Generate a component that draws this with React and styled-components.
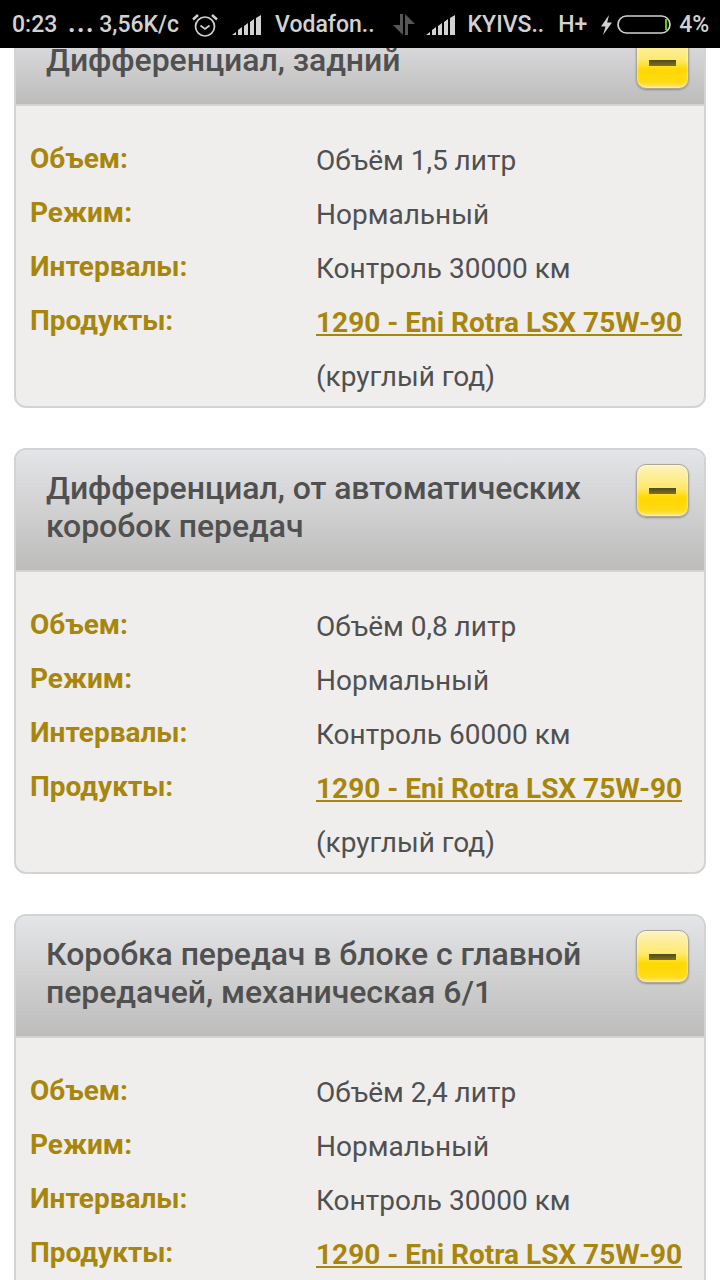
import React from 'react';
import styled, { createGlobalStyle } from 'styled-components';

const GlobalStyle = createGlobalStyle`
  html, body {
    margin: 0;
    padding: 0;
    background: #fff;
    font-family: Roboto, "Noto Sans", sans-serif;
  }
`;

const Screen = styled.div`
  position: relative;
  width: 720px;
  height: 1280px;
  overflow: hidden;
  background: #fff;
`;

const StatusBar = styled.div`
  position: absolute;
  top: 0;
  left: 0;
  right: 0;
  height: 48px;
  background: #000;
  color: #d2d2d2;
  display: flex;
  align-items: center;
  padding: 1px 0 0 12px;
  box-sizing: border-box;
  font-size: 23px;
  font-weight: 500;
  white-space: nowrap;
`;

const StatusText = styled.span`
  margin-left: ${props => props.$gap || 0}px;
`;

const StatusDots = styled.span`
  margin-left: 11px;
  font-weight: 900;
  letter-spacing: 2px;
`;

const StatusIcon = styled.svg`
  display: block;
  flex: none;
  margin-left: ${props => props.$gap || 0}px;
`;

const Page = styled.div`
  display: flex;
  flex-direction: column;
  gap: 40px;
  padding: 20px 14px 0;
`;

const Card = styled.section`
  border: 2px solid #d3d3d3;
  border-radius: 12px;
  background: #efeeed;
  overflow: hidden;
`;

const CardHeader = styled.header`
  display: flex;
  justify-content: space-between;
  align-items: flex-start;
  padding: 14px 15px 0 30px;
  background: linear-gradient(#e4e5e8, #bdbcbb);
  border-bottom: 2px solid #d3d3d3;
`;

const CardTitle = styled.h2`
  margin: 5px 0 25px;
  font-size: 32px;
  line-height: 38px;
  font-weight: 500;
  letter-spacing: -0.06px;
  color: #505050;
`;

const ToggleButton = styled.div`
  flex: none;
  width: 51px;
  height: 51px;
  border: 1px solid #aaa698;
  border-radius: 10px;
  background: linear-gradient(#fdf3c0 0%, #fee96c 45%, #ffd800 64%, #ffdb12 88%, #fde67c 100%);
  display: flex;
  align-items: center;
  justify-content: center;
  box-shadow: 0 1px 2px rgba(0, 0, 0, 0.3), inset 0 0 3px rgba(255, 255, 255, 0.7);
`;

const Minus = styled.div`
  width: 27px;
  height: 6px;
  background: linear-gradient(#4f4a20, #7d701e);
`;

const CardBody = styled.div`
  display: grid;
  grid-template-columns: 286px 1fr;
  grid-auto-rows: 54px;
  padding: 28px 0 2px 14px;
`;

const Label = styled.div`
  font-size: 28px;
  font-weight: 700;
  line-height: 54px;
  height: 54px;
  margin-top: -2px;
  color: #a8860c;
`;

const Value = styled.div`
  font-size: 28px;
  line-height: 54px;
  color: #505050;
  white-space: nowrap;
`;

const ProductLink = styled.a`
  font-size: 28px;
  font-weight: 700;
  color: #a8860c;
  text-decoration: underline;
`;

const CARDS = [
  { title: 'Дифференциал, задний', volume: 'Объём 1,5 литр', interval: 'Контроль 30000 км' },
  { title: 'Дифференциал, от автоматических коробок передач', volume: 'Объём 0,8 литр', interval: 'Контроль 60000 км' },
  { title: 'Коробка передач в блоке с главной передачей, механическая 6/1', volume: 'Объём 2,4 литр', interval: 'Контроль 30000 км' },
];

function Signal({ gap }) {
  return (
    <StatusIcon $gap={gap} width="30" height="20" viewBox="0 0 30 20" fill="#d2d2d2">
      <path d="M0 20l4-3v3zM6 20v-5l4-3v8zM12 20v-9l4-3v12zM18 20V7l4-3v16zM24 20V3l5-3v20z" />
    </StatusIcon>
  );
}

function StatusRow() {
  return (
    <StatusBar>
      <StatusText>0:23</StatusText>
      <StatusDots>...</StatusDots>
      <StatusText $gap={4}>3,56K/c</StatusText>
      <StatusIcon $gap={13} width="26" height="24" viewBox="0 0 26 24" fill="none" stroke="#d2d2d2">
        <circle cx="13" cy="13.500" r="9.500" strokeWidth="1.700" />
        <path d="M8.500 12.500l4.500 3.500 4.500-3.500" strokeWidth="1.700" />
        <path d="M1 6.500L6 2M25 6.500L20 2" strokeWidth="2.400" />
      </StatusIcon>
      <Signal gap={14} />
      <StatusText $gap={13}>Vodafon..</StatusText>
      <StatusIcon $gap={18} width="22" height="22" viewBox="0 0 22 22" fill="#565656">
        <path d="M10 0v21L0 11h7V0zM12 0l10 10h-7v11h-3z" />
      </StatusIcon>
      <Signal gap={11} />
      <StatusText $gap={12}>KYIVS..</StatusText>
      <StatusText $gap={14}>H+</StatusText>
      <StatusIcon $gap={14} width="11" height="20" viewBox="0 0 11 20" fill="#d2d2d2">
        <path d="M8 0L0 11.500h4.500L2 20l9-12.500H6.200z" />
      </StatusIcon>
      <StatusIcon $gap={5} width="54" height="19" viewBox="0 0 54 19" fill="none">
        <rect x="1" y="1" width="52" height="17" rx="8.500" stroke="#d2d2d2" strokeWidth="1.700" />
        <rect x="48" y="4" width="2" height="11" fill="#5ec81e" />
      </StatusIcon>
      <StatusText $gap={8}>4%</StatusText>
    </StatusBar>
  );
}

export default function App() {
  return (
    <Screen>
      <GlobalStyle />
      <Page>
        {CARDS.map(card => (
          <Card key={card.title}>
            <CardHeader>
              <CardTitle>{card.title}</CardTitle>
              <ToggleButton>
                <Minus />
              </ToggleButton>
            </CardHeader>
            <CardBody>
              <Label>Объем:</Label>
              <Value>{card.volume}</Value>
              <Label>Режим:</Label>
              <Value>Нормальный</Value>
              <Label>Интервалы:</Label>
              <Value>{card.interval}</Value>
              <Label>Продукты:</Label>
              <Value>
                <ProductLink>1290 - Eni Rotra LSX 75W-90</ProductLink>
              </Value>
              <span />
              <Value>(круглый год)</Value>
            </CardBody>
          </Card>
        ))}
      </Page>
      <StatusRow />
    </Screen>
  );
}
